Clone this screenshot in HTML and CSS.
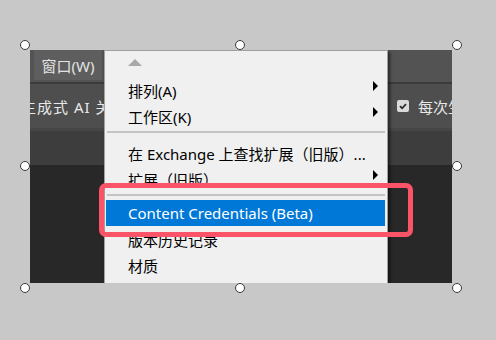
FILE: index.html
```html
<!DOCTYPE html>
<html lang="zh-CN">
  <head>
    <meta charset="UTF-8" />
    <meta name="viewport" content="width=device-width, initial-scale=1.0" />
    <title>窗口菜单</title>
    <link rel="stylesheet" href="styles.css">
  </head>
  <body>
    <div class="stage">
      <div class="shot">
        <div class="menubar">
          <div class="menuBtn">窗口(W)</div>
        </div>
        <div class="rule"></div>
        <div class="options">
          <span class="optText lead">生成式 AI 关</span>
          <span class="check"><svg width="12" height="12" viewBox="0 0 12 12"><path d="M3 6.2 L5.1 8.3 L9 4.2" fill="none" stroke="#2b2b2b" stroke-width="1.8"/></svg></span>
          <span class="optText">每次生成</span>
        </div>
        <div class="line"></div>
        <div class="band"></div>
        <div class="canvas"></div>

        <div class="dropdown">
          <div class="item scroll"><span class="upArrow"></span></div>
          <div class="item"><span>排列(A)</span><span class="sub"></span></div>
          <div class="item"><span>工作区(K)</span><span class="sub"></span></div>
          <div class="sep first"></div>
          <div class="item"><span>在 Exchange 上查找扩展（旧版）...</span></div>
          <div class="item"><span>扩展（旧版）</span><span class="sub"></span></div>
          <div class="sep"></div>
          <div class="item active"><span>Content Credentials (Beta)</span></div>
          <div class="item"><span>版本历史记录</span></div>
          <div class="item"><span>材质</span></div>
        </div>
      </div>

      <!-- annotation + selection handles -->
      <div class="mark"></div>
      <span class="handle h1"></span>
      <span class="handle h2"></span>
      <span class="handle h3"></span>
      <span class="handle h4"></span>
      <span class="handle h5"></span>
      <span class="handle h6"></span>
      <span class="handle h7"></span>
      <span class="handle h8"></span>
    </div>
  </body>
</html>
```

FILE: styles.css
```css
* {
  margin: 0;
  padding: 0;
  box-sizing: border-box;
  font-family: "Noto Sans", "Noto Sans CJK SC", sans-serif;
}

body {
  background: #c8c8c8;
}

.stage {
  position: relative;
  width: 496px;
  height: 340px;
  padding: 50px 0 0 30px;
}

.shot {
  position: relative;
  width: 422px;
  height: 233px;
  overflow: hidden;
  display: flex;
  flex-direction: column;
}

.menubar {
  height: 32px;
  flex-shrink: 0;
  background: #535353;
  display: flex;
  padding-left: 4px;
}

.menuBtn {
  width: 68px;
  height: 30px;
  background: #5e5e5e;
  color: #e4e4e4;
  font-size: 15px;
  display: flex;
  align-items: center;
  justify-content: center;
}

.rule {
  height: 2px;
  flex-shrink: 0;
  background: #3b3b3b;
}

.options {
  height: 44px;
  flex-shrink: 0;
  background: #4e4e4e;
  display: flex;
  align-items: center;
  color: #e8e8e8;
  font-size: 15px;
  white-space: nowrap;
}

.options > span {
  flex-shrink: 0;
}

.optText.lead {
  margin-left: -9px;
  letter-spacing: 1px;
  width: 376px;
}

.check {
  width: 12px;
  height: 12px;
  border-radius: 2px;
  background: #dadada;
  margin-right: 9px;
  display: flex;
}

.line {
  height: 3px;
  flex-shrink: 0;
  background: #464646;
}

.band {
  height: 34px;
  flex-shrink: 0;
  background: #3d3d3d;
}

.canvas {
  flex: 1;
  background: #282828;
}

/* dropdown */
.dropdown {
  position: absolute;
  left: 74px;
  top: 0;
  width: 284px;
  height: 250px;
  background: #f0f0f0;
  border: 1px solid #a0a0a0;
  padding: 0 2px 0 1px;
  box-shadow: 2px 2px 3px rgba(0, 0, 0, 0.55);
}

.item {
  height: 26px;
  display: flex;
  align-items: center;
  justify-content: space-between;
  padding: 0 7px 0 22px;
  font-size: 15px;
  color: #000;
  white-space: nowrap;
}

.item.active {
  background: #0078d7;
  color: #fff;
}

.upArrow {
  width: 0;
  height: 0;
  border-left: 7px solid transparent;
  border-right: 7px solid transparent;
  border-bottom: 7px solid #a8a8a8;
  margin-top: -3px;
}

.sub {
  width: 0;
  height: 0;
  border-top: 5px solid transparent;
  border-bottom: 5px solid transparent;
  border-left: 5px solid #000;
  margin-bottom: 8px;
}

.sep {
  height: 2px;
  background: #c4c4c4;
  margin: 2px 0 4px 1px;
}

.sep.first {
  margin-bottom: 7px;
}

/* red annotation box */
.mark {
  position: absolute;
  left: 99px;
  top: 183px;
  width: 314px;
  height: 54px;
  border: 5px solid #fb5367;
  border-radius: 7px;
}

.handle {
  position: absolute;
  width: 10px;
  height: 10px;
  border-radius: 50%;
  background: #fff;
  border: 1px solid #3a3a3a;
}

.h1 { left: 20px; top: 40px; }
.h2 { left: 235px; top: 40px; }
.h3 { left: 452px; top: 40px; }
.h4 { left: 20px; top: 161px; }
.h5 { left: 452px; top: 161px; }
.h6 { left: 20px; top: 283px; }
.h7 { left: 235px; top: 283px; }
.h8 { left: 452px; top: 283px; }
```
